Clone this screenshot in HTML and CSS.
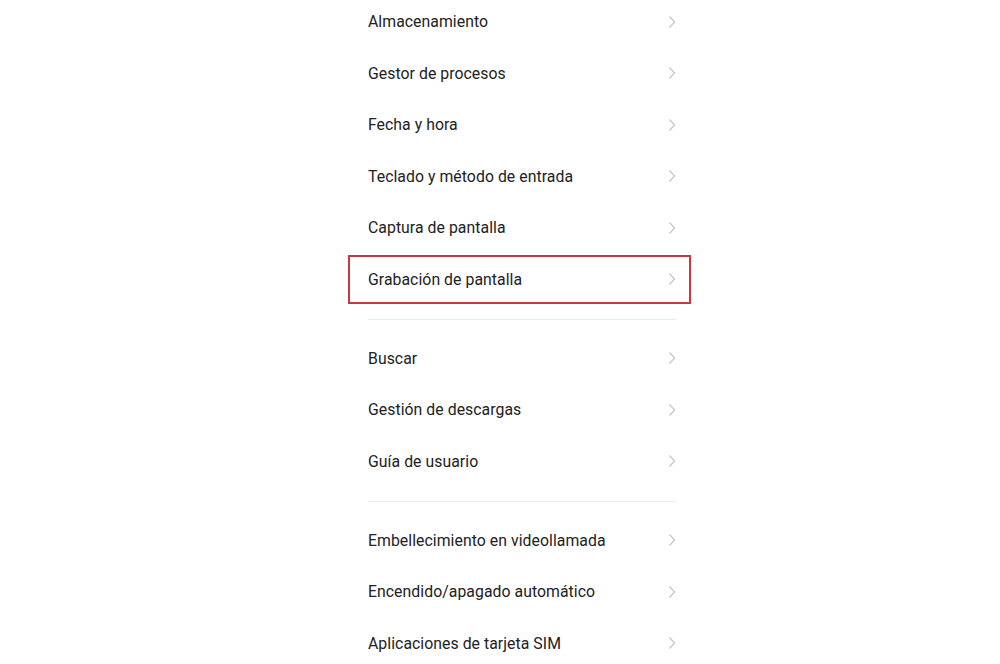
FILE: index.html
```html
<!DOCTYPE html>
<html lang="es">
<head>
<meta charset="utf-8">
<title>Ajustes</title>
<link rel="stylesheet" href="styles.css">
</head>
<body>
<div class="page">
  <div class="list">
    <div class="group">
      <div class="row"><span class="label">Almacenamiento</span><svg class="chev" viewBox="0 0 8 14"><path d="M1.5 1.5 L6.5 7 L1.5 12.5"/></svg></div>
      <div class="row"><span class="label">Gestor de procesos</span><svg class="chev" viewBox="0 0 8 14"><path d="M1.5 1.5 L6.5 7 L1.5 12.5"/></svg></div>
      <div class="row"><span class="label">Fecha y hora</span><svg class="chev" viewBox="0 0 8 14"><path d="M1.5 1.5 L6.5 7 L1.5 12.5"/></svg></div>
      <div class="row"><span class="label">Teclado y método de entrada</span><svg class="chev" viewBox="0 0 8 14"><path d="M1.5 1.5 L6.5 7 L1.5 12.5"/></svg></div>
      <div class="row"><span class="label">Captura de pantalla</span><svg class="chev" viewBox="0 0 8 14"><path d="M1.5 1.5 L6.5 7 L1.5 12.5"/></svg></div>
      <div class="row highlight"><span class="label">Grabación de pantalla</span><svg class="chev" viewBox="0 0 8 14"><path d="M1.5 1.5 L6.5 7 L1.5 12.5"/></svg></div>
    </div>
    <div class="divider"></div>
    <div class="group">
      <div class="row"><span class="label">Buscar</span><svg class="chev" viewBox="0 0 8 14"><path d="M1.5 1.5 L6.5 7 L1.5 12.5"/></svg></div>
      <div class="row"><span class="label">Gestión de descargas</span><svg class="chev" viewBox="0 0 8 14"><path d="M1.5 1.5 L6.5 7 L1.5 12.5"/></svg></div>
      <div class="row"><span class="label">Guía de usuario</span><svg class="chev" viewBox="0 0 8 14"><path d="M1.5 1.5 L6.5 7 L1.5 12.5"/></svg></div>
    </div>
    <div class="divider"></div>
    <div class="group">
      <div class="row"><span class="label">Embellecimiento en videollamada</span><svg class="chev" viewBox="0 0 8 14"><path d="M1.5 1.5 L6.5 7 L1.5 12.5"/></svg></div>
      <div class="row"><span class="label">Encendido/apagado automático</span><svg class="chev" viewBox="0 0 8 14"><path d="M1.5 1.5 L6.5 7 L1.5 12.5"/></svg></div>
      <div class="row"><span class="label">Aplicaciones de tarjeta SIM</span><svg class="chev" viewBox="0 0 8 14"><path d="M1.5 1.5 L6.5 7 L1.5 12.5"/></svg></div>
    </div>
  </div>
</div>
</body>
</html>
```
FILE: styles.css
```css
html, body {
  margin: 0;
  padding: 0;
  background: #ffffff;
  overflow: hidden;
}
.page {
  width: 1000px;
  height: 664px;
  overflow: hidden;
  display: flex;
  align-items: flex-start;
}
.list {
  margin-left: 347px;
  margin-top: -4px;
  width: 345px;
  display: flex;
  flex-direction: column;
  flex-shrink: 0;
}
.group {
  display: flex;
  flex-direction: column;
  flex-shrink: 0;
}
.row {
  height: 51.5px;
  flex-shrink: 0;
  display: flex;
  align-items: center;
  justify-content: space-between;
  padding: 0 16px 0 21px;
  box-sizing: border-box;
}
.label {
  font-family: Roboto, "Noto Sans", sans-serif;
  font-size: 15.8px;
  color: #222222;
  letter-spacing: 0.05px;
}
.chev {
  width: 8px;
  height: 14px;
  fill: none;
  stroke: #c9c9c9;
  stroke-width: 1.4;
}
.highlight {
  outline: 2px solid #c8383c;
  outline-offset: -3px;
}
.divider {
  height: 1px;
  flex-shrink: 0;
  background: #ececec;
  margin: 13.5px 16px 13px 21px;
}
```
